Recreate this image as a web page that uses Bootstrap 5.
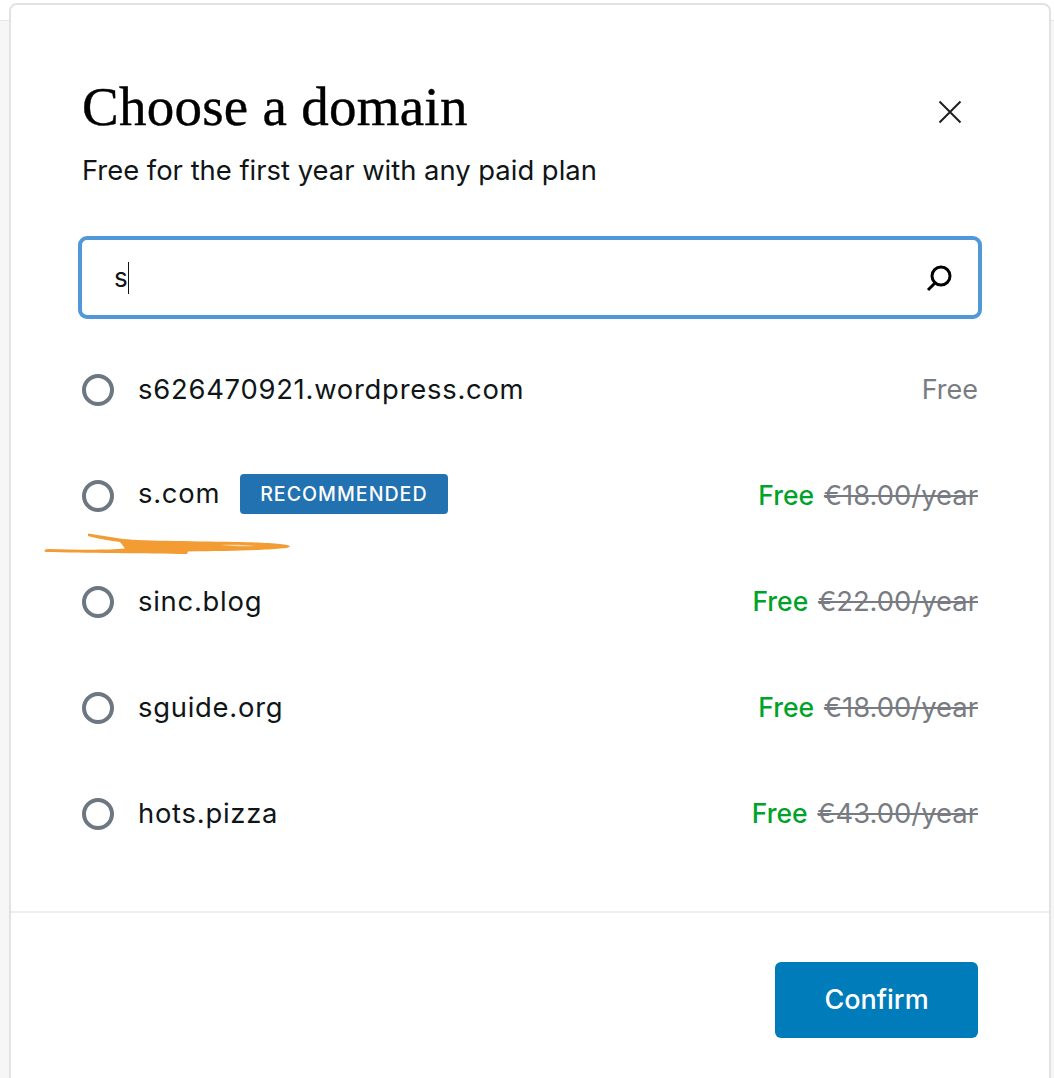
<!DOCTYPE html>
<html lang="en">
<head>
    <meta charset="UTF-8">
    <meta name="viewport" content="width=device-width, initial-scale=1.0">
    <title>Choose a domain</title>
    <link rel="stylesheet" href="https://cdn.jsdelivr.net/npm/bootstrap@5.3.0/dist/css/bootstrap.min.css">
    <style>
        html, body { height: 1078px; overflow: hidden; }
        body { background: #fff; font-family: Inter, "Liberation Sans", sans-serif; color: #101517; position: relative; }
        .page-back { height: 1078px; padding: 3px 3px 0 9px; background: linear-gradient(#fff 20px, #e6e6e6 20px, #e6e6e6 21px, #f6f6f6 21px); }
        .domain-modal { height: 1100px; border: 2px solid #e2e2e2; border-radius: 8px 8px 0 0; background: #fff; }
        .modal-top { padding: 72px 71px 0 71px; }
        .modal-heading { font-family: "Liberation Serif", serif; font-size: 55px; line-height: 60px; margin: 0; color: #000; letter-spacing: .25px; -webkit-text-stroke: .4px #000; }
        .modal-sub { font-size: 27.4px; line-height: 36px; margin: 15px 0 0; color: #101517; }
        .close-x { margin: 23px 16px 0 0; background: none; border: 0; padding: 0; line-height: 0; }
        .search-box { height: 83px; margin: 48px -4px 0 -4px; border: 4px solid #5198d8; border-radius: 9px; padding: 0 25px 0 32px; font-size: 26px; }
        .caret-bar { width: 1.5px; height: 32px; background: #101517; }
        .domain-list { margin-top: 18px; }
        .domain-row { height: 106px; }
        .domain-radio.form-check-input { width: 32px; height: 32px; margin: 0 24px 0 0; border: 4px solid #6c7781; flex-shrink: 0; }
        .domain-name { font-size: 27.4px; letter-spacing: .75px; }
        .domain-name:has(+ .rec-tag) { margin-bottom: 4px; }
        .rec-tag { background: #2271b1; color: #fff; font-size: 19.6px; font-weight: 500; letter-spacing: 1px; line-height: 40px; height: 40px; padding: 0 20px; border-radius: 4px; margin: 0 0 4px 20px; }
        .price { font-size: 27.4px; white-space: nowrap; }
        .price-free { color: #00a32a; font-weight: 500; font-size: 26.5px; margin-right: 2px; }
        .price-old { color: #787c82; text-decoration: line-through; }
        .price-plain { color: #787c82; font-size: 27px; }
        .modal-foot { margin-top: 44px; border-top: 2px solid #eeeeee; padding: 49px 71px 0; }
        .confirm-btn.btn { width: 203px; height: 76px; background: #007cba; border: 0; color: #fff; font-size: 27px; font-weight: 500; border-radius: 6px; }
        .scribble { position: absolute; left: 40px; top: 528px; }
    </style>
</head>
<body>
    <div class="page-back">
        <div class="card domain-modal">
            <div class="modal-top">
                <div class="d-flex justify-content-between align-items-start">
                    <div>
                        <h1 class="modal-heading">Choose a domain</h1>
                        <p class="modal-sub">Free for the first year with any paid plan</p>
                    </div>
                    <button class="close-x" type="button" aria-label="Close">
                        <svg width="24" height="24" viewBox="0 0 24 24"><path d="M1.500 1.500 22.500 22.500M22.500 1.500 1.500 22.500" stroke="#1e1e1e" stroke-width="2" fill="none"/></svg>
                    </button>
                </div>
                <div class="search-box d-flex align-items-center">
                    <span>s</span><span class="caret-bar"></span>
                    <svg class="ms-auto" width="28" height="28" viewBox="0 0 28 28"><circle cx="16" cy="12" r="9" stroke="#000" stroke-width="3" fill="none"/><path d="M10 19 3 26" stroke="#000" stroke-width="3" fill="none"/></svg>
                </div>
                <div class="domain-list" id="domain-list"></div>
            </div>
            <div class="modal-foot d-flex justify-content-end">
                <button class="btn confirm-btn" type="button">Confirm</button>
            </div>
        </div>
    </div>
    <svg class="scribble" width="256" height="32" viewBox="0 0 256 32">
        <path d="M48 5.500 80 10.500C95 13 150 13 195 14 225 14.500 250 15.500 250 18.500 250 21.500 200 23 148 23.500L147 26C110 25.500 40 25 6 24 3 23 5 21 8 21 40 22 70 22 85 20.500L80 14C65 12 55 10 48 8Z" fill="#f39c33"/>
        <path d="M180 17C195 16.500 205 17 216 18 205 18.500 195 18.500 180 17Z" fill="#fbd9a8"/>
    </svg>

    <script>
        const domains = [
            { name: "s626470921.wordpress.com", price: null },
            { name: "s.com", price: "€18.00/year", tag: "RECOMMENDED" },
            { name: "sinc.blog", price: "€22.00/year" },
            { name: "sguide.org", price: "€18.00/year" },
            { name: "hots.pizza", price: "€43.00/year" }
        ];

        const list = document.getElementById('domain-list');
        domains.forEach(d => {
            const row = document.createElement('div');
            row.className = 'domain-row d-flex align-items-center';
            const tag = d.tag ? `<span class="rec-tag">${d.tag}</span>` : '';
            const price = d.price
                ? `<span class="price-free">Free</span> <span class="price-old">${d.price}</span>`
                : `<span class="price-plain">Free</span>`;
            row.innerHTML = `
                <input class="form-check-input domain-radio" type="radio" name="domain">
                <span class="domain-name">${d.name}</span>${tag}
                <span class="price ms-auto">${price}</span>
            `;
            list.appendChild(row);
        });
    </script>
</body>
</html>
